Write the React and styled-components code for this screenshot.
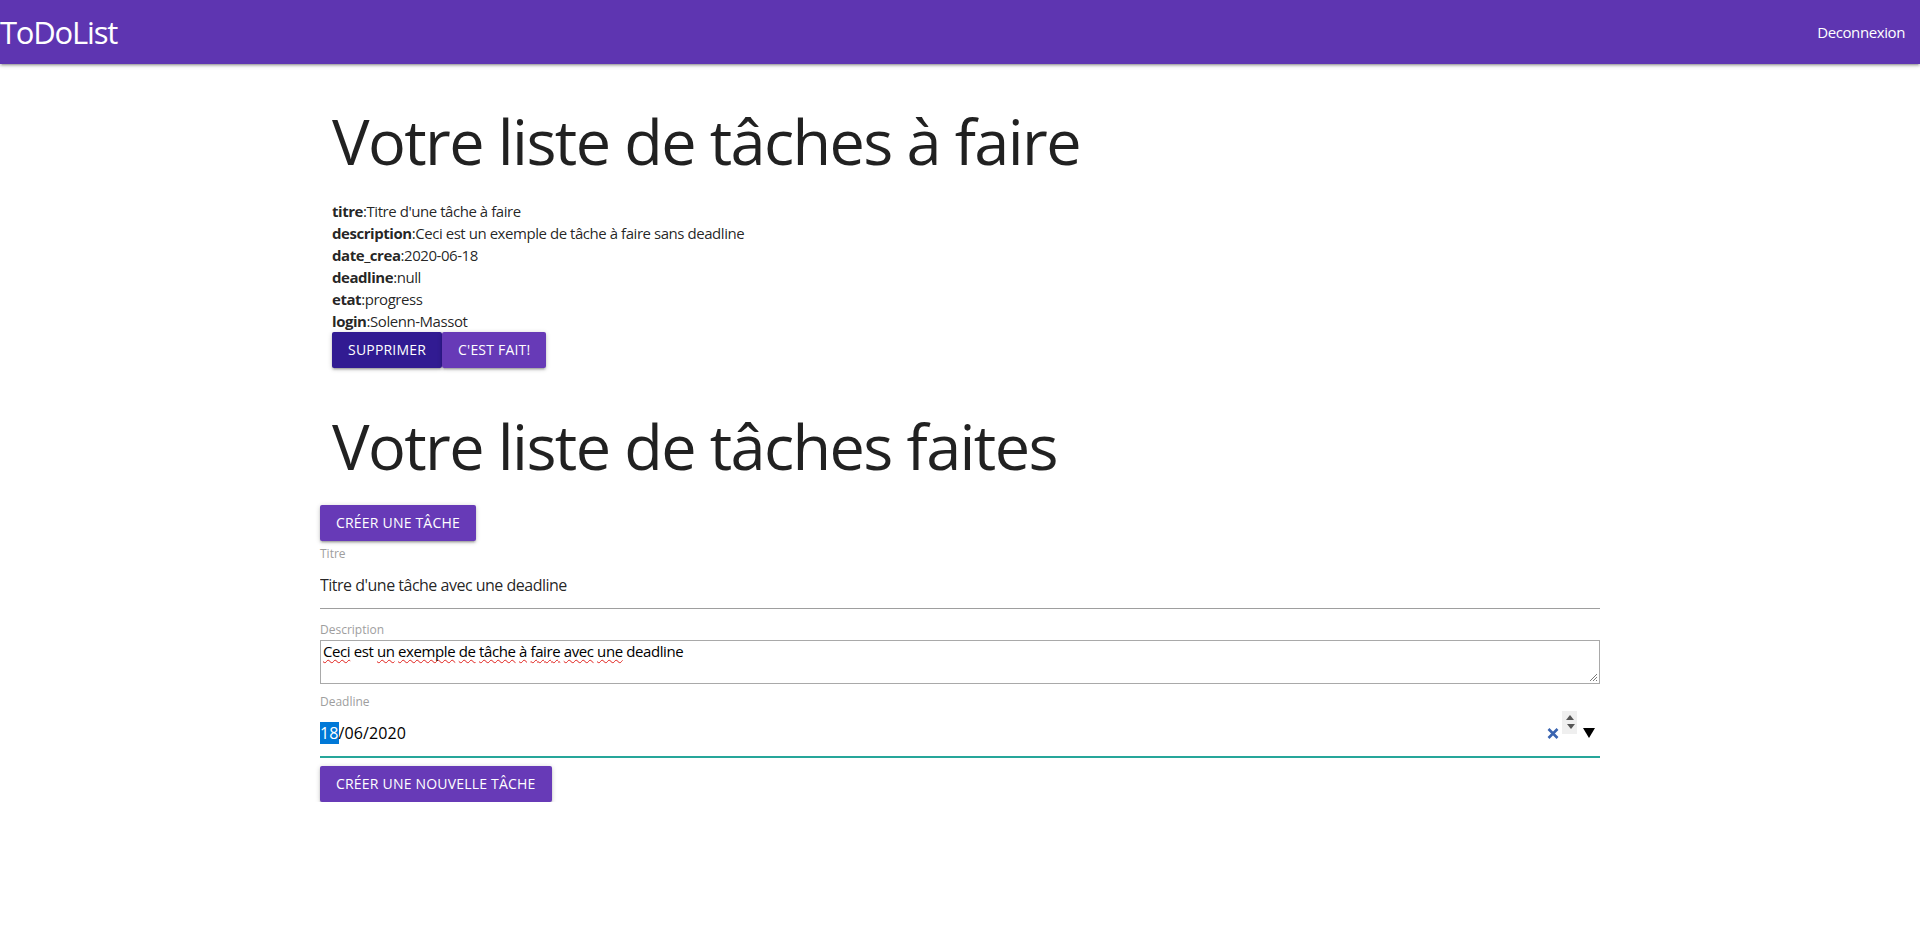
import React from "react";
import styled, { createGlobalStyle } from "styled-components";

const GlobalStyle = createGlobalStyle`
  html, body {
    margin: 0;
    padding: 0;
    background: #ffffff;
  }
  body {
    font-family: "Open Sans", "Noto Sans", sans-serif;
    font-size: 15px;
    line-height: 1.5;
    color: rgba(0, 0, 0, 0.87);
  }
`;

const task = [
  { key: "titre", value: "Titre d'une tâche à faire" },
  { key: "description", value: "Ceci est un exemple de tâche à faire sans deadline" },
  { key: "date_crea", value: "2020-06-18" },
  { key: "deadline", value: "null" },
  { key: "etat", value: "progress" },
  { key: "login", value: "Solenn-Massot" },
];

const descWords = [
  ["Ceci", true],
  ["est", false],
  ["un", true],
  ["exemple", true],
  ["de", true],
  ["tâche", true],
  ["à", true],
  ["faire", true],
  ["avec", true],
  ["une", true],
  ["deadline", false],
];

function App() {
  return (
    <>
      <GlobalStyle />
      <NavStyled>
        <Brand>ToDoList</Brand>
        <NavLink href="#">Deconnexion</NavLink>
      </NavStyled>
      <Container>
        <Col>
          <Heading>Votre liste de tâches à faire</Heading>
          <TaskList>
            {task.map(({ key, value }) => (
              <TaskLine key={key}>
                <b>{key}</b>:{value}
              </TaskLine>
            ))}
          </TaskList>
          <ButtonGroup>
            <Btn $dark>Supprimer</Btn>
            <Btn>C'est fait!</Btn>
          </ButtonGroup>
          <Heading $top="43px">Votre liste de tâches faites</Heading>
        </Col>
        <Btn>Créer une tâche</Btn>
        <FormStyled>
          <Label>Titre</Label>
          <TextInput type="text" defaultValue="Titre d'une tâche avec une deadline" />
          <Label>Description</Label>
          <AreaBox>
            {descWords.map(([w, bad], i) => (
              <React.Fragment key={i}>
                {bad ? <Misspelled>{w}</Misspelled> : w}
                {i < descWords.length - 1 ? " " : ""}
              </React.Fragment>
            ))}
            <Grip width="9" height="9" viewBox="0 0 9 9">
              <path d="M8 1 L1 8 M8 4 L4 8 M8 7 L7 8" stroke="#7a7a7a" strokeWidth="1" />
            </Grip>
          </AreaBox>
          <Label $top="9px">Deadline</Label>
          <DateField>
            <DateValue>
              <Selected>18</Selected>/06/2020
            </DateValue>
            <DateControls>
              <svg width="12" height="11" viewBox="0 0 12 11">
                <path d="M1.5 1 L10.5 10 M10.5 1 L1.5 10" stroke="#3a64b0" strokeWidth="2.6" />
              </svg>
              <Spinner>
                <svg width="8" height="5" viewBox="0 0 8 5">
                  <path d="M0 5 L4 0 L8 5 Z" fill="#555" />
                </svg>
                <svg width="8" height="5" viewBox="0 0 8 5">
                  <path d="M0 0 L8 0 L4 5 Z" fill="#555" />
                </svg>
              </Spinner>
              <svg width="12" height="10" viewBox="0 0 12 10">
                <path d="M0 0 L12 0 L6 10 Z" fill="#000" />
              </svg>
            </DateControls>
          </DateField>
          <Btn>Créer une nouvelle tâche</Btn>
        </FormStyled>
      </Container>
    </>
  );
}

const NavStyled = styled.nav`
  display: flex;
  align-items: center;
  justify-content: space-between;
  height: 64px;
  background: #5e35b1;
  color: #ffffff;
  box-shadow: 0 2px 2px 0 rgba(0, 0, 0, 0.14), 0 3px 1px -2px rgba(0, 0, 0, 0.12),
    0 1px 5px 0 rgba(0, 0, 0, 0.2);
`;

const Brand = styled.a`
  font-size: 31px;
  line-height: 64px;
  color: #ffffff;
  letter-spacing: -1.2px;
`;

const NavLink = styled.a`
  padding: 0 15px;
  font-size: 15px;
  line-height: 64px;
  letter-spacing: -0.4px;
  color: #ffffff;
  text-decoration: none;
`;

const Container = styled.main`
  width: 1280px;
  margin: 0 auto;
`;

const Col = styled.div`
  padding: 0 12px;
`;

const Heading = styled.h1`
  margin: ${(p) => p.$top || "42px"} 0 24px;
  font-size: 63px;
  font-weight: 400;
  line-height: 1.1;
  letter-spacing: -1.6px;
  color: rgba(0, 0, 0, 0.87);
`;

const TaskList = styled.div`
  padding-top: 1px;
`;

const TaskLine = styled.div`
  font-size: 15px;
  line-height: 22px;
  letter-spacing: -0.45px;
  b {
    font-weight: 700;
  }
`;

const ButtonGroup = styled.div`
  display: flex;
`;

const Btn = styled.button`
  display: inline-block;
  height: 36px;
  padding: 0 16px;
  border: none;
  border-radius: 2px;
  background: ${(p) => (p.$dark ? "#311b92" : "#673ab7")};
  color: #ffffff;
  font-family: "Open Sans", "Noto Sans", sans-serif;
  font-size: 14px;
  line-height: 36px;
  letter-spacing: 0.2px;
  text-transform: uppercase;
  cursor: pointer;
  box-shadow: 0 2px 2px 0 rgba(0, 0, 0, 0.14), 0 3px 1px -2px rgba(0, 0, 0, 0.12),
    0 1px 5px 0 rgba(0, 0, 0, 0.2);
`;

const FormStyled = styled.form`
  display: flex;
  flex-direction: column;
  align-items: flex-start;
`;

const Label = styled.label`
  margin-top: ${(p) => p.$top || "4px"};
  font-size: 12px;
  line-height: 18px;
  color: #9e9e9e;
`;

const TextInput = styled.input`
  box-sizing: content-box;
  width: 100%;
  height: 45px;
  margin: 0 0 8px;
  padding: 0;
  border: none;
  border-bottom: 1px solid #9e9e9e;
  outline: none;
  background: transparent;
  font-family: "Open Sans", "Noto Sans", sans-serif;
  font-size: 16px;
  letter-spacing: -0.5px;
  color: rgba(0, 0, 0, 0.87);
`;

const AreaBox = styled.div`
  position: relative;
  box-sizing: border-box;
  width: 100%;
  height: 44px;
  margin-top: 1px;
  padding: 0 2px;
  border: 1px solid #a9a9a9;
  font-size: 15px;
  line-height: 20px;
  letter-spacing: -0.4px;
  color: #000000;
`;

const Misspelled = styled.span`
  text-decoration: underline wavy #e0201b;
  text-decoration-thickness: 1px;
  text-decoration-skip-ink: none;
  text-underline-offset: 2px;
`;

const Grip = styled.svg`
  position: absolute;
  right: 1px;
  bottom: 1px;
`;

const DateField = styled.div`
  display: flex;
  align-items: center;
  justify-content: space-between;
  box-sizing: content-box;
  width: 100%;
  height: 45px;
  margin-bottom: 9px;
  border-bottom: 1px solid #26a69a;
  box-shadow: 0 1px 0 0 #26a69a;
  font-size: 16px;
  letter-spacing: 0.1px;
  color: #000000;
`;

const DateValue = styled.span`
  line-height: 19px;
`;

const Selected = styled.span`
  background: #0078d7;
  color: #ffffff;
`;

const DateControls = styled.div`
  display: flex;
  align-items: center;
  gap: 3px;
  height: 100%;
  padding-right: 5px;
  svg:last-child {
    margin-left: 3px;
  }
`;

const Spinner = styled.div`
  display: flex;
  flex-direction: column;
  align-items: center;
  justify-content: center;
  gap: 4px;
  align-self: flex-start;
  width: 15px;
  height: 23px;
  background: #efefef;
`;

export default App;
